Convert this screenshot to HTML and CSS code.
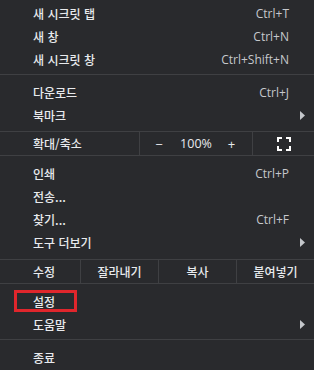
FILE: index.html
```html
<!DOCTYPE html>
<html lang="ko">
<head>
<meta charset="utf-8">
<link rel="stylesheet" href="styles.css">
</head>
<body>
<div class="menu">
  <div class="item first"><span class="label">새 시크릿 탭</span><span class="key">Ctrl+T</span></div>
  <div class="item"><span class="label">새 창</span><span class="key">Ctrl+N</span></div>
  <div class="item"><span class="label">새 시크릿 창</span><span class="key">Ctrl+Shift+N</span></div>
  <div class="sep"></div>
  <div class="item"><span class="label">다운로드</span><span class="key">Ctrl+J</span></div>
  <div class="item"><span class="label">북마크</span><svg class="arrow" width="5" height="9" viewBox="0 0 5 9"><polygon points="0,0 5,4.5 0,9" fill="#c4c7cb"/></svg></div>
  <div class="zoomrow">
    <span class="label">확대/축소</span>
    <div class="zoomctl"><span class="zbtn">−</span><span class="zval">100%</span><span class="zbtn plus">+</span></div>
    <div class="fscell"><svg width="14" height="14" viewBox="0 0 14 14" fill="none" stroke="#ffffff" stroke-width="2"><path d="M1 5V1H5M9 1H13V5M13 9V13H9M5 13H1V9"/></svg></div>
  </div>
  <div class="item after"><span class="label">인쇄</span><span class="key">Ctrl+P</span></div>
  <div class="item"><span class="label">전송...</span></div>
  <div class="item"><span class="label">찾기...</span><span class="key">Ctrl+F</span></div>
  <div class="item"><span class="label">도구 더보기</span><svg class="arrow" width="5" height="9" viewBox="0 0 5 9"><polygon points="0,0 5,4.5 0,9" fill="#c4c7cb"/></svg></div>
  <div class="editrow">
    <span class="label">수정</span>
    <span class="ecell">잘라내기</span>
    <span class="ecell">복사</span>
    <span class="ecell">붙여넣기</span>
  </div>
  <div class="item after marked"><span class="label">설정</span><span class="highlight"></span></div>
  <div class="item"><span class="label">도움말</span><svg class="arrow" width="5" height="9" viewBox="0 0 5 9"><polygon points="0,0 5,4.5 0,9" fill="#c4c7cb"/></svg></div>
  <div class="sep"></div>
  <div class="item"><span class="label">종료</span></div>
</div>
</body>
</html>
```
FILE: styles.css
```css
html, body {
  margin: 0;
  padding: 0;
  background: #292a2d;
}
body {
  width: 314px;
  height: 370px;
  overflow: hidden;
  font-family: "Open Sans", "Noto Sans CJK KR", sans-serif;
  font-size: 12px;
  color: #e8eaed;
}
.menu {
  padding-top: 2px;
}
.item {
  height: 23px;
  display: flex;
  align-items: center;
  padding: 0 25px 0 33px;
  position: relative;
}
.label {
  flex: 1;
  font-family: "Noto Sans CJK KR", "Open Sans", sans-serif;
  font-weight: 500;
  white-space: nowrap;
}
.key {
  color: #c6c8cc;
  font-size: 12px;
}
.arrow {
  margin-right: -16px;
}
.sep {
  height: 1px;
  background: #3f4043;
  margin: 3px 0 6px;
}
.zoomrow {
  display: grid;
  grid-template-columns: 139px 113px 1fr;
  height: 23px;
  border-top: 1px solid #3f4043;
  border-bottom: 1px solid #3f4043;
  margin-top: 4px;
}
.zoomrow .label {
  padding-left: 33px;
  display: flex;
  align-items: center;
}
.zoomctl {
  display: grid;
  grid-template-columns: 38px 1fr 38px;
  align-items: center;
  border-left: 1px solid #3f4043;
  text-align: center;
}
.zbtn {
  font-size: 13px;
}
.plus {
  padding-right: 3px;
}
.zval {
  font-size: 12.5px;
}
.fscell {
  border-left: 1px solid #3f4043;
  display: flex;
  align-items: center;
  justify-content: center;
}
.item.after {
  margin-top: 6px;
}
.editrow {
  display: grid;
  grid-template-columns: 80px 1fr 1fr 1fr;
  height: 23px;
  border-top: 1px solid #3f4043;
  border-bottom: 1px solid #3f4043;
  margin-top: 5px;
}
.editrow .label {
  padding-left: 33px;
  display: flex;
  align-items: center;
}
.ecell {
  font-family: "Noto Sans CJK KR", sans-serif;
  font-weight: 500;
  border-left: 1px solid #3f4043;
  display: flex;
  align-items: center;
  justify-content: center;
}
.highlight {
  position: absolute;
  left: 14px;
  top: 0;
  width: 63px;
  height: 22px;
  box-sizing: border-box;
  border: 3px solid #e0262c;
}
```
